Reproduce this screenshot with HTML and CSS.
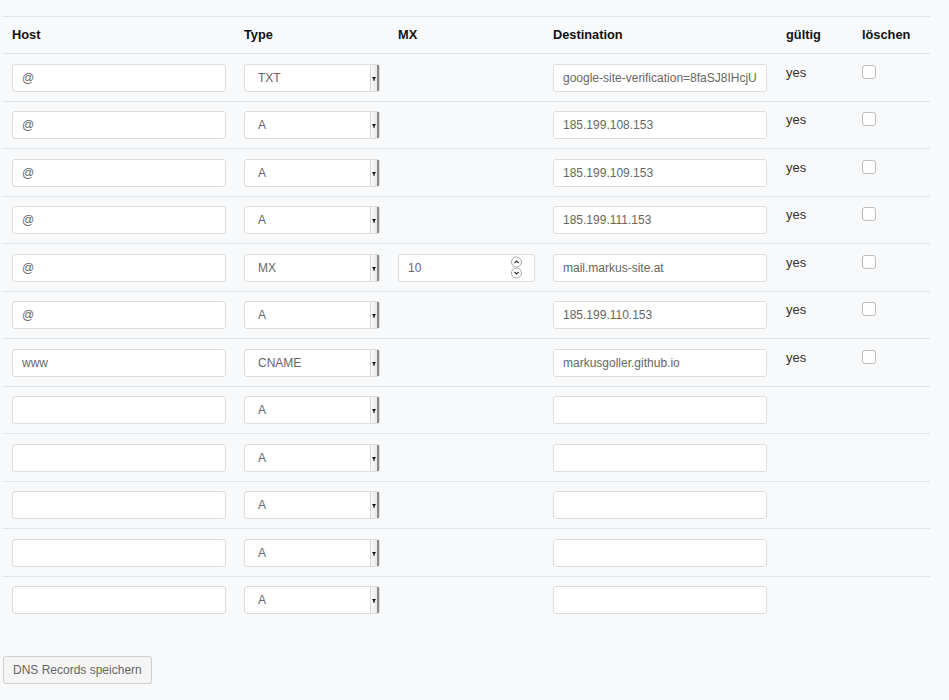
FILE: index.html
```html
<!DOCTYPE html>
<html lang="de">
<head>
    <meta charset="UTF-8">
    <link rel="stylesheet" href="styles.css">
    <title>DNS Records</title>
</head>
<body>
    <form class="dns" action="#">
        <table class="records">
            <colgroup>
                <col class="c-host"><col class="c-type"><col class="c-mx"><col class="c-dest"><col class="c-valid"><col class="c-del">
            </colgroup>
            <thead>
                <tr>
                    <th>Host</th><th>Type</th><th>MX</th><th>Destination</th><th>gültig</th><th>löschen</th>
                </tr>
            </thead>
            <tbody id="rows"></tbody>
        </table>
        <button type="submit" class="save">DNS Records speichern</button>
    </form>
    <script>
        var records = [
            ['@', 'TXT', '', 'google-site-verification=8faSJ8IHcjUıTq0xk', true],
            ['@', 'A', '', '185.199.108.153', true],
            ['@', 'A', '', '185.199.109.153', true],
            ['@', 'A', '', '185.199.111.153', true],
            ['@', 'MX', '10', 'mail.markus-site.at', true],
            ['@', 'A', '', '185.199.110.153', true],
            ['www', 'CNAME', '', 'markusgoller.github.io', true],
            ['', 'A', '', '', false],
            ['', 'A', '', '', false],
            ['', 'A', '', '', false],
            ['', 'A', '', '', false],
            ['', 'A', '', '', false]
        ];
        var types = ['A', 'AAAA', 'CNAME', 'MX', 'TXT'];
        var arrow = '<svg class="sel-arrow" width="9" height="26" viewBox="0 0 9 26"><defs><linearGradient id="g" x1="0" x2="1"><stop offset="0" stop-color="#fdfdfd"/><stop offset="1" stop-color="#e2e2e2"/></linearGradient></defs><rect x="0" y="0" width="9" height="26" fill="url(#g)"/><rect x="0" y="0" width="1" height="26" fill="#d6d6d6"/><rect x="7" y="0" width="2" height="26" fill="#8a8a8a"/><polygon points="2,12 6,12 4,15" fill="#111"/><rect x="3.5" y="14" width="1" height="2" fill="#111"/></svg>';
        var spin = '<svg class="spin" width="13" height="23" viewBox="0 0 13 23"><circle cx="6.5" cy="6" r="5" fill="#fff" stroke="#a5a5a5"/><circle cx="6.5" cy="17" r="5" fill="#fff" stroke="#a5a5a5"/><path d="M4.5 7 L6.5 5 L8.5 7" fill="none" stroke="#333" stroke-width="1.2"/><path d="M4.5 16 L6.5 18 L8.5 16" fill="none" stroke="#333" stroke-width="1.2"/></svg>';
        var html = '';
        records.forEach(function (r, i) {
            var opts = types.map(function (t) {
                return '<option' + (t == r[1] ? ' selected' : '') + '>' + t + '</option>';
            }).join('');
            html += '<tr>';
            html += '<td><input class="field" type="text" name="host' + i + '" value="' + r[0] + '"></td>';
            html += '<td><span class="sel"><select class="field" name="type' + i + '">' + opts + '</select>' + arrow + '</span></td>';
            html += '<td>' + (r[1] == 'MX' ? '<span class="num"><input class="field" type="text" name="mx' + i + '" value="' + r[2] + '">' + spin + '</span>' : '') + '</td>';
            html += '<td><input class="field" type="text" name="dest' + i + '" value="' + r[3] + '"></td>';
            html += '<td class="valid">' + (r[4] ? 'yes' : '') + '</td>';
            html += '<td>' + (r[4] ? '<input class="del" type="checkbox" name="del' + i + '">' : '') + '</td>';
            html += '</tr>';
        });
        document.querySelector('#rows').innerHTML = html;
    </script>
</body>
</html>
```

FILE: styles.css
```css
body {
    margin: 0;
    padding: 0;
    background-color: #f8f9fa;
    font-family: "Liberation Sans", Arial, sans-serif;
    color: #222;
}
form.dns {
    padding: 16px 0 0 3px;
}
table.records {
    width: 927px;
    border-collapse: collapse;
    table-layout: fixed;
    margin-bottom: 33px;
}
col.c-host { width: 232px; }
col.c-type { width: 154px; }
col.c-mx { width: 155px; }
col.c-dest { width: 233px; }
col.c-valid { width: 76px; }
col.c-del { width: 77px; }
table.records th {
    text-align: left;
    font-size: 12.8px;
    font-weight: bold;
    color: #111;
    line-height: 18px;
    padding: 9px 9px 9px 9px;
    border-top: 1px solid #e1e4e7;
    vertical-align: top;
}
table.records td {
    padding: 9.5px 9px 9px 9px;
    border-top: 1px solid #e1e4e7;
    vertical-align: top;
    font-size: 13px;
    line-height: 18px;
}
table.records td.valid {
    color: #333;
}
.field {
    box-sizing: border-box;
    display: block;
    width: 214px;
    height: 28px;
    margin: 0;
    padding: 0 9px;
    border: 1px solid #dcdcdc;
    border-radius: 3px;
    background: #fff;
    font-family: "Liberation Sans", Arial, sans-serif;
    font-size: 12px;
    color: #666;
    outline: none;
}
.sel {
    position: relative;
    display: block;
    width: 136px;
}
.sel select.field {
    width: 136px;
    padding: 0 13px;
    -webkit-appearance: none;
    appearance: none;
}
.sel .sel-arrow {
    position: absolute;
    right: 1px;
    top: 1px;
}
.num {
    position: relative;
    display: block;
    width: 137px;
}
.num .field {
    width: 137px;
}
.num .spin {
    position: absolute;
    right: 12px;
    top: 2px;
}
input.del {
    -webkit-appearance: none;
    appearance: none;
    box-sizing: border-box;
    display: block;
    width: 14px;
    height: 14px;
    margin: 1px 0 0 0;
    border: 1px solid #bdbdbd;
    border-radius: 3px;
    background: #fff;
}
button.save {
    display: block;
    height: 28px;
    padding: 0 9px;
    border: 1px solid #cfcfcf;
    border-radius: 3px;
    background: #f5f5f5;
    font-family: "Liberation Sans", Arial, sans-serif;
    font-size: 12px;
    color: #666;
}
```
